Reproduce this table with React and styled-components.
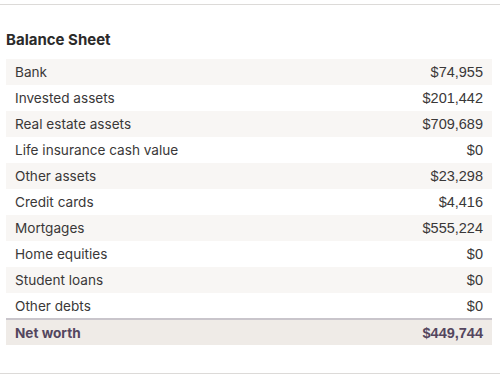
import React from 'react';
import styled, { createGlobalStyle } from 'styled-components';

const rows = [
  ['Bank', '$74,955'],
  ['Invested assets', '$201,442'],
  ['Real estate assets', '$709,689'],
  ['Life insurance cash value', '$0'],
  ['Other assets', '$23,298'],
  ['Credit cards', '$4,416'],
  ['Mortgages', '$555,224'],
  ['Home equities', '$0'],
  ['Student loans', '$0'],
  ['Other debts', '$0'],
];

function App() {
  return (
    <>
      <GlobalStyle />
      <Panel>
        <Title>Balance Sheet</Title>
        <Table>
          <tbody>
            {rows.map(([label, value], i) => (
              <Row key={label} $striped={i % 2 === 0}>
                <Label>{label}</Label>
                <Value>{value}</Value>
              </Row>
            ))}
            <TotalRow>
              <TotalLabel>Net worth</TotalLabel>
              <TotalValue>$449,744</TotalValue>
            </TotalRow>
          </tbody>
        </Table>
      </Panel>
    </>
  );
}

const GlobalStyle = createGlobalStyle`
  body {
    margin: 0;
    padding-top: 4px;
    background: #fff;
    font-family: "Inter", "Noto Sans", sans-serif;
  }
`;

const Panel = styled.div`
  width: 500px;
  height: 370px;
  box-sizing: border-box;
  border-top: 1px solid #dcdad8;
  border-bottom: 1px solid #dcdad8;
  padding: 25px 8px 0 6px;
`;

const Title = styled.h2`
  margin: 0 0 9px;
  font-size: 15px;
  line-height: 20px;
  font-weight: 700;
  color: #2b2a2a;
`;

const Table = styled.table`
  width: 486px;
  border-collapse: collapse;
`;

const Row = styled.tr`
  height: 26px;
  background: ${(p) => (p.$striped ? '#f8f6f4' : '#fff')};
`;

const Label = styled.td`
  padding: 0 0 0 9px;
  font-size: 13.6px;
  color: #3a3838;
`;

const Value = styled.td`
  padding: 0 9px 0 0;
  text-align: right;
  font-family: "Liberation Sans", Arial, sans-serif;
  font-size: 14.5px;
  color: #3a3838;
`;

const TotalRow = styled.tr`
  height: 26px;
  background: #efebe7;
  border-top: 2px solid #c9c5cb;
`;

const TotalLabel = styled(Label)`
  font-weight: 700;
  color: #54465e;
`;

const TotalValue = styled(Value)`
  font-weight: 700;
  color: #54465e;
`;

export default App;
